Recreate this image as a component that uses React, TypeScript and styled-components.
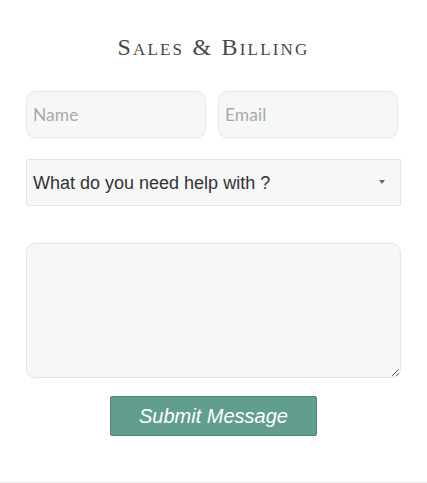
import React from "react";
import styled, { createGlobalStyle } from "styled-components";

const GlobalStyle = createGlobalStyle`
  html, body {
    margin: 0;
    padding: 0;
    background: #ffffff;
  }
  body {
    font-family: "Liberation Sans", Arial, sans-serif;
  }
`;

const Page = styled.div`
  width: 427px;
  height: 483px;
  box-sizing: border-box;
  border-bottom: 1px solid #ececec;
  display: flex;
  flex-direction: column;
  align-items: center;
`;

const Title = styled.h2`
  margin: 33px 0 0;
  font-family: "Liberation Serif", "Times New Roman", serif;
  font-weight: 400;
  font-size: 24px;
  font-variant: small-caps;
  letter-spacing: 2.2px;
  color: #474747;
  line-height: 28px;
`;

const Form = styled.form`
  width: 375px;
  margin-top: 30px;
  display: flex;
  flex-direction: column;
`;

const Row = styled.div`
  display: flex;
  gap: 12px;
`;

const Input = styled.input`
  width: 180px;
  height: 47px;
  box-sizing: border-box;
  padding: 0 6px;
  border: 1px solid #e6e8e8;
  border-radius: 9px;
  background: #f6f8f7;
  font-family: Lato, "Liberation Sans", sans-serif;
  font-size: 17.5px;
  color: #444;
  outline: none;

  &::placeholder {
    color: #a9a9a9;
  }
`;

const SelectWrap = styled.div`
  position: relative;
  margin-top: 21px;
`;

const Select = styled.select`
  width: 100%;
  height: 47px;
  box-sizing: border-box;
  appearance: none;
  padding: 0 6px;
  border: 1px solid #e5e7e6;
  border-radius: 1px;
  background: #f6f8f7;
  font-family: "Liberation Sans", Arial, sans-serif;
  font-size: 18px;
  color: #333;
  outline: none;
`;

const Caret = styled.svg`
  position: absolute;
  right: 16px;
  top: 21px;
  pointer-events: none;
`;

const TextArea = styled.textarea`
  margin-top: 37px;
  width: 100%;
  height: 135px;
  box-sizing: border-box;
  border: 1px solid #e3e5e4;
  border-radius: 9px;
  background: #f6f8f7;
  font-family: "Liberation Sans", Arial, sans-serif;
  font-size: 16px;
  outline: none;
`;

const Submit = styled.button`
  align-self: center;
  margin-top: 18px;
  width: 207px;
  height: 40px;
  border: 1px solid #4f8577;
  border-radius: 2px;
  background: #629e8f;
  color: #ffffff;
  font-family: "Liberation Sans", Arial, sans-serif;
  font-style: italic;
  font-size: 20px;
  cursor: pointer;
`;

export default function App() {
  return (
    <>
      <GlobalStyle />
      <Page>
        <Title>Sales &amp; Billing</Title>
        <Form onSubmit={(e) => e.preventDefault()}>
          <Row>
            <Input type="text" placeholder="Name" />
            <Input type="email" placeholder="Email" />
          </Row>
          <SelectWrap>
            <Select defaultValue="">
              <option value="">What do you need help with ?</option>
              <option value="billing">Billing</option>
              <option value="sales">Sales</option>
            </Select>
            <Caret width="6" height="4" viewBox="0 0 6 4">
              <path d="M0 0 L6 0 L3 4 Z" fill="#666" />
            </Caret>
          </SelectWrap>
          <TextArea />
          <Submit type="submit">Submit Message</Submit>
        </Form>
      </Page>
    </>
  );
}
